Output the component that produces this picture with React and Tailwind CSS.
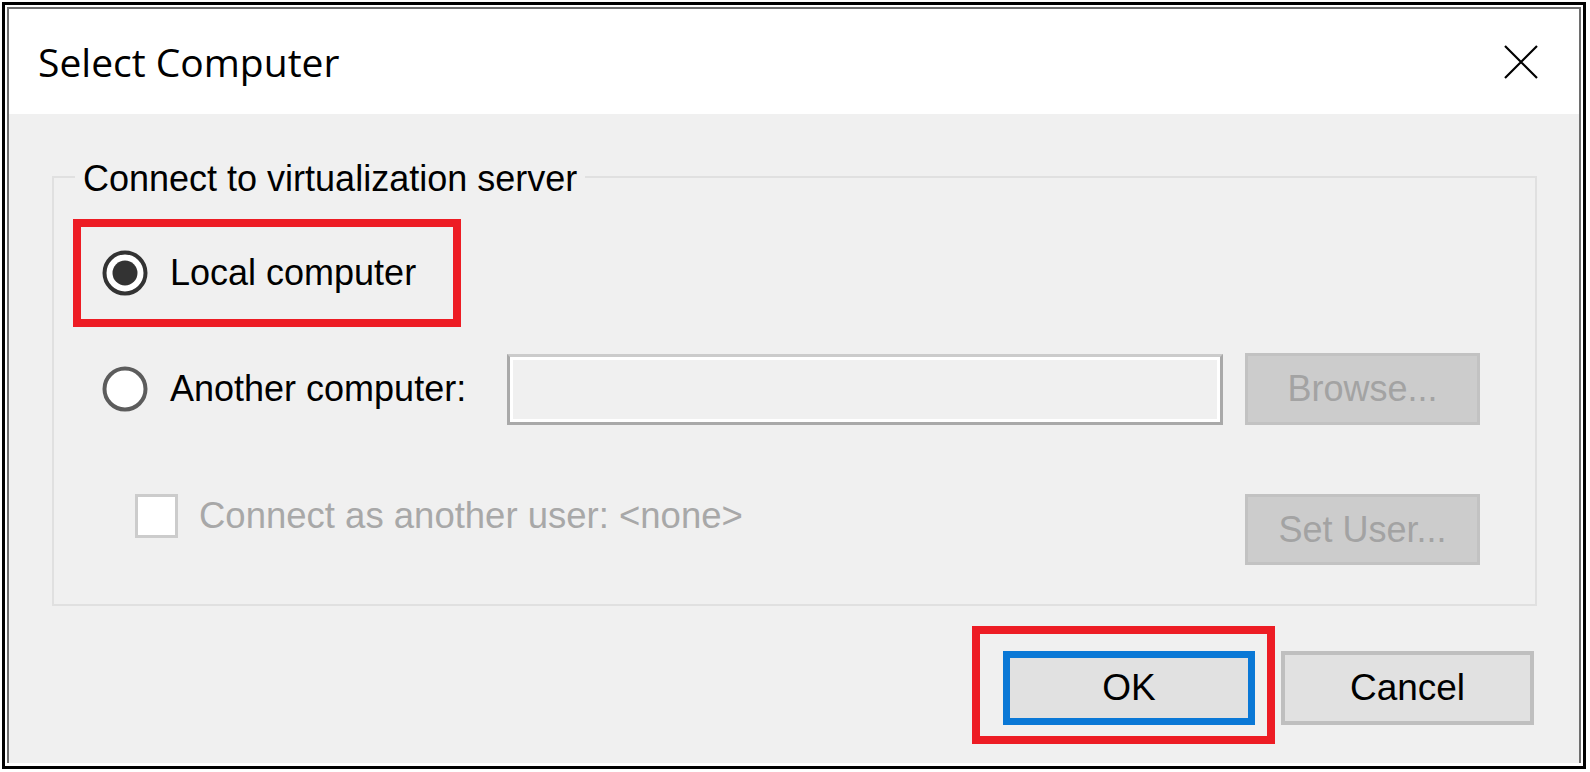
import React from "react";

function RadioIcon({ checked }) {
  return (
    <svg width="46" height="46" viewBox="0 0 46 46" className="shrink-0">
      <circle cx="23" cy="23" r="20.5" fill="#ffffff" stroke={checked ? "#333333" : "#5c5c5c"} strokeWidth="4" />
      {checked && <circle cx="23" cy="23" r="12.5" fill="#333333" />}
    </svg>
  );
}

export default function App() {
  return (
    <div className="w-[1590px] h-[772px] bg-white pt-[2px] pl-[2px] font-['Liberation_Sans',Arial,sans-serif] text-black">
      <div className="w-[1584px] h-[767px] border-[3px] border-black bg-white pt-[2px] px-[2px] pb-[3px]">
        <div className="h-full flex flex-col border-t-2 border-x-2 border-[#6e6e6e]">
          {/* Title bar */}
          <div className="h-[105px] shrink-0 bg-white flex items-center justify-between pl-[29px] pr-[41px]">
            <span className="font-['Open_Sans',sans-serif] text-[39px] leading-none text-black">Select Computer</span>
            <svg width="34" height="34" viewBox="0 0 34 34">
              <path d="M1 1 L33 33 M33 1 L1 33" stroke="#000" strokeWidth="2.2" fill="none" />
            </svg>
          </div>

          {/* Content */}
          <div className="flex-1 bg-[#f0f0f0] flex flex-col">
            {/* Group box */}
            <div className="relative mt-[62px] ml-[43px] mr-[42px] h-[430px] border-2 border-[#e0e0e0] pt-[41px]">
              <span className="absolute left-[21px] top-[-21px] px-[8px] bg-[#f0f0f0] text-[36px] leading-[44px]">
                Connect to virtualization server
              </span>

              {/* Row 1 */}
              <div className="ml-[19px] w-[388px] h-[108px] border-[8px] border-[#ed1c24] flex items-center pl-[21px]">
                <RadioIcon checked />
                <span className="ml-[22px] text-[36px] leading-[44px]">Local computer</span>
              </div>

              {/* Row 2 */}
              <div className="mt-[26px] h-[72px] flex items-center pl-[48px]">
                <div className="w-[405px] flex items-center">
                  <RadioIcon />
                  <span className="ml-[22px] text-[36px] leading-[44px]">Another computer:</span>
                </div>
                <div className="w-[716px] h-[71px] border-[3px] border-[#a9a9a9] border-t-[#cbcbcb]">
                  <div className="w-full h-full border-[3px] border-white bg-[#f0f0f0]"></div>
                </div>
                <div className="ml-[22px] w-[235px] h-[72px] bg-[#cccccc] border-[3px] border-[#c2c2c2] flex items-center justify-center text-[36px] text-[#a3a3a3]">
                  Browse...
                </div>
              </div>

              {/* Row 3 */}
              <div className="mt-[69px] flex items-start justify-between pl-[81px] pr-[55px]">
                <div className="h-[44px] flex items-center">
                  <div className="w-[43px] h-[44px] bg-white border-[3px] border-[#cccccc]"></div>
                  <span className="ml-[21px] text-[36.5px] leading-[44px] text-[#a8a8a8]">
                    Connect as another user: &lt;none&gt;
                  </span>
                </div>
                <div className="w-[235px] h-[71px] bg-[#cccccc] border-[3px] border-[#c2c2c2] flex items-center justify-center text-[36px] text-[#a3a3a3]">
                  Set User...
                </div>
              </div>
            </div>

            {/* Buttons */}
            <div className="mt-[20px] flex items-start justify-end pr-[45px]">
              <div className="w-[303px] h-[118px] border-[8px] border-[#ed1c24] pt-[17px] pl-[23px]">
                <div className="w-[252px] h-[74px] bg-[#e1e1e1] border-[7px] border-[#0a78d6] flex items-center justify-center text-[37px]">
                  OK
                </div>
              </div>
              <div className="ml-[6px] mt-[25px] w-[253px] h-[74px] bg-[#e1e1e1] border-[4px] border-[#bfbfbf] flex items-center justify-center text-[37px]">
                Cancel
              </div>
            </div>
          </div>
        </div>
      </div>
    </div>
  );
}
